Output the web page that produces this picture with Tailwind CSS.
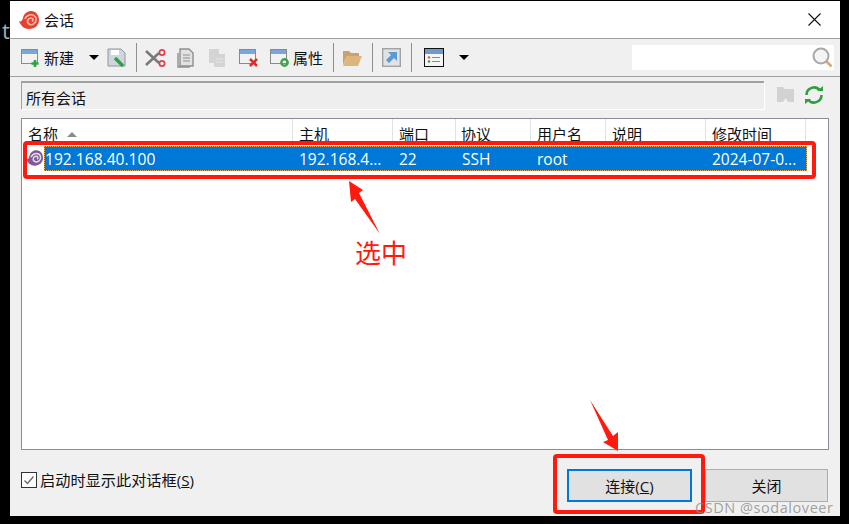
<!DOCTYPE html>
<html lang="zh">
<head>
<meta charset="UTF-8">
<title>会话</title>
<script src="https://cdn.jsdelivr.net/npm/@tailwindcss/browser@4"></script>
</head>
<body class="w-[849px] h-[524px] overflow-hidden bg-black relative font-['Open_Sans','Noto_Sans_CJK_SC',sans-serif] text-[15px] text-[#111]">
  <!-- text of the window behind -->
  <div class="absolute left-[2px] top-[16px] text-[22px] leading-[28px] text-[#9fb0bd]">t</div>

  <!-- dialog -->
  <div class="absolute left-[10px] top-[1px] w-[830px] h-[515px] bg-[#f0f0f0] flex flex-col">
    <!-- title bar -->
    <div class="h-[37px] shrink-0 bg-white flex items-center pl-[9px] pr-[19px]">
      <svg class="w-[20px] h-[18px]" viewBox="0 0 20 18"><path d="M0 10C2 11 3 10 4 7C5 2 9 0 12 0C17 0 20 4 20 9C20 14 16 18 10 18C5 18 2 15 0 10Z" fill="#e8402f"/><path d="M6 8C8 3 15 2 17 7C18 12 13 15 10 13C7 11 9 7 12 7C14 7 15 9 13 10.500" fill="none" stroke="#f7b5a8" stroke-width="1.600"/></svg>
      <span class="ml-[5px] text-[15px] leading-[20px]">会话</span>
      <svg class="ml-auto w-[13px] h-[13px]" viewBox="0 0 13 13"><path d="M.5.5l12 12M12.5.5l-12 12" stroke="#111" stroke-width="1.1" fill="none"/></svg>
    </div>

    <!-- toolbar -->
    <div class="h-[39px] shrink-0 border-y border-[#a0a0a0] flex items-center pl-[11px] relative">
      <svg class="w-[20px] h-[20px]" viewBox="0 0 20 20"><rect x=".5" y="1.5" width="16" height="14" fill="#f2f2f2" stroke="#8a8a8a"/><rect x="1" y="2" width="15" height="4" fill="#7ba7d6"/><path d="M14 12v7M10.5 15.5h7" stroke="#2ea043" stroke-width="2.6"/></svg>
      <span class="ml-[3px] w-[30px] leading-[20px] whitespace-nowrap">新建</span>
      <span class="ml-[15px] w-0 h-0 border-x-[5px] border-x-transparent border-t-[5px] border-t-black"></span>
      <svg class="ml-[8px] w-[20px] h-[20px]" viewBox="0 0 20 20"><path d="M1 1h13l4 4v13H1z" fill="#cfd6dc" stroke="#8a979f"/><rect x="4" y="2" width="8" height="5" fill="#fff"/><path d="M8 10l8 8" stroke="#2ea043" stroke-width="3.4"/></svg>
      <span class="ml-[9px] w-px h-[29px] bg-[#8f8f8f]"></span>
      <svg class="ml-[8px] w-[21px] h-[20px]" viewBox="0 0 21 20"><path d="M1 3l13 12M1 17L14 5" stroke="#7a7a7a" stroke-width="2.6"/><circle cx="17" cy="4.5" r="2.6" fill="#fff" stroke="#e0414a" stroke-width="1.8"/><circle cx="17" cy="15.5" r="2.6" fill="#fff" stroke="#e0414a" stroke-width="1.8"/></svg>
      <svg class="ml-[11px] w-[18px] h-[20px]" viewBox="0 0 18 20"><path d="M3 1h9l4 4v13H3z" fill="#e2e2e2" stroke="#8e8e8e" stroke-width="1.4"/><path d="M1 5v14h12" fill="none" stroke="#8e8e8e" stroke-width="1.4"/><path d="M6 7h7M6 10h7M6 13h7" stroke="#8e8e8e"/></svg>
      <svg class="ml-[13px] w-[18px] h-[20px]" viewBox="0 0 18 20"><path d="M1 1h10v5h6v13H6v-4H1z" fill="#d4d4d4"/><path d="M8 11h7M8 14h7" stroke="#e8e8e8"/></svg>
      <svg class="ml-[13px] w-[20px] h-[20px]" viewBox="0 0 20 20"><rect x=".5" y="1.5" width="16" height="14" fill="#f2f2f2" stroke="#8a8a8a"/><rect x="1" y="2" width="15" height="4" fill="#7ba7d6"/><path d="M11 11l7 7M18 11l-7 7" stroke="#df2b2b" stroke-width="2.6"/></svg>
      <svg class="ml-[11px] w-[20px] h-[20px]" viewBox="0 0 20 20"><rect x=".5" y="1.5" width="16" height="14" fill="#f2f2f2" stroke="#8a8a8a"/><rect x="1" y="2" width="15" height="4" fill="#7ba7d6"/><circle cx="14.5" cy="14.5" r="3.2" fill="none" stroke="#3fa34d" stroke-width="2.4"/></svg>
      <span class="ml-[3px] w-[30px] leading-[20px] whitespace-nowrap">属性</span>
      <span class="ml-[10px] w-px h-[29px] bg-[#8f8f8f]"></span>
      <svg class="ml-[8px] w-[21px] h-[18px]" viewBox="0 0 21 18"><path d="M1 2h6l2 2h8v3H5L1 16z" fill="#c9a36b"/><path d="M5 7h15l-4 10H1z" fill="#dcb57f"/></svg>
      <span class="ml-[9px] w-px h-[29px] bg-[#8f8f8f]"></span>
      <svg class="ml-[9px] w-[19px] h-[19px]" viewBox="0 0 19 19"><rect x=".7" y=".7" width="17.6" height="17.6" fill="#dfe3e6" stroke="#a2a2a2" stroke-width="1.4"/><path d="M6 4h9v9l-3-3-5 5-3-3 5-5z" fill="#5b9bd5"/></svg>
      <span class="ml-[10px] w-px h-[29px] bg-[#8f8f8f]"></span>
      <svg class="ml-[12px] w-[20px] h-[19px]" viewBox="0 0 20 19"><rect x=".5" y=".5" width="19" height="18" fill="#f5f5f5" stroke="#111"/><rect x="1" y="1" width="18" height="5" fill="#6f9bc9"/><circle cx="5" cy="9.5" r="1.3" fill="#df5a5a"/><circle cx="5" cy="13.5" r="1.3" fill="#3fa34d"/><path d="M8 9.5h8M8 13.5h8" stroke="#888"/></svg>
      <span class="ml-[15px] w-0 h-0 border-x-[5px] border-x-transparent border-t-[5px] border-t-black"></span>
      <div class="ml-auto mr-[6px] w-[202px] h-[25px] bg-white flex items-center justify-end pr-[1px]">
        <svg class="w-[21px] h-[21px]" viewBox="0 0 21 21"><circle cx="9" cy="9" r="7.5" fill="#f4f4f4" stroke="#a9a9a9" stroke-width="2"/><path d="M14.5 14.5l5 5" stroke="#d6a878" stroke-width="2.6"/></svg>
      </div>
    </div>

    <!-- path bar -->
    <div class="h-[34px] shrink-0 flex items-center pl-[11px] pt-[1px]">
      <div class="w-[743px] h-[28px] bg-[#eeeeee] border-t-2 border-l border-[#a0a0a0] shadow-[1px_1px_0_#fff] flex items-center pl-[4px] pt-[5px] leading-[20px]">所有会话</div>
      <svg class="ml-[12px] w-[19px] h-[18px]" viewBox="0 0 19 18"><path d="M1 1h6l2 2h9v13h-6l-2.500-4-2.500 4H1z" fill="#d2d2d2"/></svg>
      <svg class="ml-[9px] w-[20px] h-[20px]" viewBox="0 0 20 20"><path d="M2.500 10A7.500 7.500 0 0 1 16 5.500M17.500 10A7.500 7.500 0 0 1 4 14.500" fill="none" stroke="#2f9e3f" stroke-width="2.6"/><path d="M13 6h6V1zM7 14H1v5z" fill="#2f9e3f"/></svg>
    </div>

    <!-- session list -->
    <div class="ml-[11px] mt-[7px] w-[808px] h-[332px] shrink-0 bg-white border border-[#8c8c96]">
      <div class="h-[27px] grid grid-cols-[271px_100px_63px_75px_75px_100px_100px] leading-[31px] text-[15px]">
        <div class="pl-[6px] border-r border-[#e2e2e2] flex items-center gap-[9px]"><span>名称</span><span class="w-0 h-0 border-x-[5px] border-x-transparent border-b-[5px] border-b-[#8c8c8c]"></span></div>
        <div class="pl-[6px] border-r border-[#e2e2e2]">主机</div>
        <div class="pl-[6px] border-r border-[#e2e2e2]">端口</div>
        <div class="pl-[5px] border-r border-[#e2e2e2]">协议</div>
        <div class="pl-[6px] border-r border-[#e2e2e2]">用户名</div>
        <div class="pl-[6px] border-r border-[#e2e2e2]">说明</div>
        <div class="pl-[6px] border-r border-[#e2e2e2]">修改时间</div>
      </div>
      <div class="h-[25px] flex items-stretch">
        <svg class="ml-[4px] mt-[4px] w-[17px] h-[16px] shrink-0" viewBox="0 0 20 18"><path d="M0 10C2 11 3 10 4 7C5 2 9 0 12 0C17 0 20 4 20 9C20 14 16 18 10 18C5 18 2 15 0 10Z" fill="#7d5a94"/><path d="M6 8C8 3 15 2 17 7C18 12 13 15 10 13C7 11 9 7 12 7C14 7 15 9 13 10.500" fill="none" stroke="#e7dff0" stroke-width="1.600"/></svg>
        <div class="ml-px w-[763px] grid grid-cols-[249px_100px_63px_75px_75px_100px_101px] bg-[#0078d7] text-white outline-1 -outline-offset-1 outline-dotted outline-[#e8b25c] leading-[26px]">
          <div class="pl-px text-[15.600px]">192.168.40.100</div>
          <div class="pl-[6px] text-[15.500px]">192.168.4...</div>
          <div class="pl-[6px] text-[15.500px]">22</div>
          <div class="pl-[6px] text-[15.500px]">SSH</div>
          <div class="pl-[6px] text-[15.500px]">root</div>
          <div></div>
          <div class="pl-[6px] text-[15.500px]">2024-07-0...</div>
        </div>
      </div>
    </div>

    <!-- footer -->
    <div class="flex-1 flex items-start pl-[11px] pr-[12px]">
      <label class="mt-[20px] flex items-center">
        <span class="w-[16px] h-[16px] bg-white border border-[#333] flex items-center justify-center">
          <svg class="w-[12px] h-[12px]" viewBox="0 0 12 12"><path d="M1.500 6.500l3 3 6-7" fill="none" stroke="#666" stroke-width="1.300"/></svg>
        </span>
        <span class="ml-[3px] text-[15.200px] leading-[20px] whitespace-nowrap">启动时显示此对话框(<span class="underline">S</span>)</span>
      </label>
      <button class="ml-auto mt-[19px] w-[125px] h-[33px] bg-[#e1e1e1] border-2 border-[#0078d7] text-[15px] leading-[20px]">连接(<span class="underline">C</span>)</button>
      <button class="ml-[13px] mt-[19px] w-[123px] h-[33px] bg-[#e1e1e1] border border-[#adadad] text-[15px] leading-[20px]">关闭</button>
    </div>
  </div>

  <!-- red annotations -->
  <div class="absolute left-[23px] top-[141px] w-[793px] h-[38px] border-4 border-[#ff1a0d] rounded-[4px]"></div>
  <div class="absolute left-[553px] top-[454px] w-[152px] h-[60px] border-4 border-[#ff1a0d] rounded-[4px]"></div>
  <svg class="absolute left-0 top-0 w-[849px] h-[524px] pointer-events-none" viewBox="0 0 849 524">
    <path d="M349 181L363 190L359 193L380 234L355 199L351 202Z" fill="#ff1a0d"/>
    <path d="M590 400L613 436L618 432L618 451L603 442L608 440Z" fill="#ff1a0d"/>
  </svg>
  <div class="absolute left-[355px] top-[236px] text-[26px] leading-[34px] text-[#ff1a0d]">选中</div>
  <div class="absolute left-[695px] top-[498px] text-[14.500px] leading-[20px] tracking-[.55px] text-[#8a8a8a]/80">CSDN @sodaloveer</div>
</body>
</html>
